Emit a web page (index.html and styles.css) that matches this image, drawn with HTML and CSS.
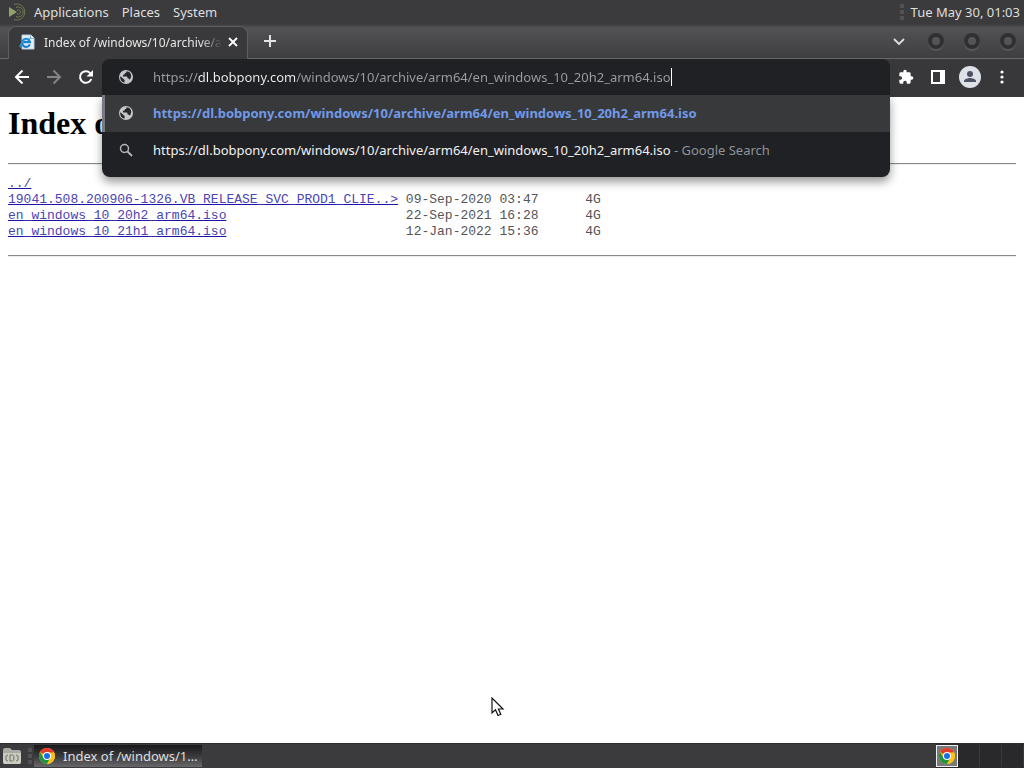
FILE: index.html
```
<!DOCTYPE html>
<html lang="en">
<head>
    <meta charset="UTF-8">
    <meta name="viewport" content="width=device-width, initial-scale=1.0">
    <title>Index of /windows/10/archive/arm64/</title>
    <link rel="stylesheet" href="styles.css">
</head>
<body>
    <!-- shared icons -->
    <svg class="defs" aria-hidden="true">
        <symbol id="globe" viewBox="0 0 16 16">
            <circle cx="8" cy="8" r="7" fill="#c4c7c9"/>
            <path d="M2.4 7.2 6.6 11v2.6C4 13.2 2 11 2.2 8zM8.6 2.3c.2 1.2-.5 1.7-1.6 1.9-.3 1.2-.8 1.5-2 1.6v1.6h3.6c1 .2 1 1.2 1.1 2 1 .1 1.7.4 2 1.3 2.6-3 1.600-7-1.700-8.200z" fill="#242629"/>
        </symbol>
        <symbol id="chrome" viewBox="0 0 16 16">
            <circle cx="8" cy="8" r="8" fill="#fbc116"/>
            <path d="M8 8 1.070 4A8 8 0 0 1 14.930 4z" fill="#e33b2e"/>
            <path d="M1.070 4A8 8 0 0 0 8 16l3.400-6L8 8l-3.400 2z" fill="#229342"/>
            <path d="M8 4.400h7.100A8 8 0 0 1 8 16l3.200-6z" fill="#fbc116"/>
            <circle cx="8" cy="8" r="4" fill="#fff"/>
            <circle cx="8" cy="8" r="3" fill="#1a6ee8"/>
        </symbol>
    </svg>

    <header class="panel">
        <nav class="menu">
            <svg class="logo" viewBox="0 0 20 20" width="20" height="20" aria-hidden="true">
                <g fill="none" stroke="#6f7d50">
                    <path d="M6 2.500A8 8 0 1 1 6 17.500"/>
                    <path d="M8 5.500a5 5 0 1 1 0 9"/>
                    <path d="M9 8.200a2.200 2.200 0 1 1 0 3.600"/>
                </g>
                <path d="M1 5l8 5-8 5z" fill="#93a06c"/>
            </svg>
            <button>Applications</button>
            <button>Places</button>
            <button>System</button>
        </nav>
        <div class="clock"><span class="grip"></span><time>Tue May 30, 01:03</time></div>
    </header>

    <div class="tab-strip">
        <div class="tab">
            <svg viewBox="0 0 16 16" width="16" height="16" aria-hidden="true">
                <path d="M3 1h9l3 3v11H3z" fill="#e8f1fa" stroke="#b8cde0"/>
                <path d="M11.500 1v3.500H15" fill="#fff" stroke="#9bb8d4"/>
                <path d="M10.800 10.300A4 4 0 1 1 11 8.200H4" fill="none" stroke="#1c83cf" stroke-width="2.200"/>
                <path d="M1.500 13.500C-1 12 5 4 12.500 3.800" fill="none" stroke="#45a8e8"/>
            </svg>
            <span class="tab-title">Index of /windows/10/archive/a</span>
            <button class="icon-btn" aria-label="Close tab">
                <svg viewBox="0 0 16 16" width="16" height="16"><path d="M4 4l8 8M12 4l-8 8" stroke="#fff" stroke-width="1.800"/></svg>
            </button>
        </div>
        <button class="icon-btn new-tab" aria-label="New tab">
            <svg viewBox="0 0 16 16" width="16" height="16"><path d="M8 2v12M2 8h12" stroke="#e4e4e4" stroke-width="2"/></svg>
        </button>
        <div class="window-buttons">
            <button class="icon-btn" aria-label="Search tabs">
                <svg viewBox="0 0 16 16" width="16" height="16"><path d="M3 6l5 5 5-5" fill="none" stroke="#dedede" stroke-width="1.800"/></svg>
            </button>
            <button class="round-btn" aria-label="Minimize"></button>
            <button class="round-btn" aria-label="Maximize"></button>
            <button class="round-btn" aria-label="Close"></button>
        </div>
    </div>

    <div class="toolbar">
        <div class="nav-buttons">
            <button class="icon-btn" aria-label="Back">
                <svg viewBox="0 0 16 16" width="16" height="16"><path d="M15 8H2M8.500 1.500 2 8l6.500 6.500" fill="none" stroke="#fff" stroke-width="2"/></svg>
            </button>
            <button class="icon-btn" aria-label="Forward" disabled>
                <svg viewBox="0 0 16 16" width="16" height="16"><path d="M1 8h13M7.500 1.500 14 8l-6.500 6.500" fill="none" stroke="#848486" stroke-width="2"/></svg>
            </button>
            <button class="icon-btn" aria-label="Reload">
                <svg viewBox="0 0 16 16" width="16" height="16"><path d="M13.300 10A5.800 5.800 0 1 1 12 3.900L13.500 5.500" fill="none" stroke="#fff" stroke-width="2"/><path d="M15 1v6.500H8.500z" fill="#fff"/></svg>
            </button>
        </div>
        <div class="omnibox">
            <div class="address">
                <svg class="row-icon" width="16" height="16" aria-hidden="true"><use href="#globe"/></svg>
                <input class="url" type="text" aria-label="Address and search bar" spellcheck="false" value="https://dl.bobpony.com/windows/10/archive/arm64/en_windows_10_20h2_arm64.iso">
                <span class="caret"></span>
            </div>
            <div class="suggestions">
                <a class="suggestion active" href="#">
                    <svg class="row-icon" width="16" height="16" aria-hidden="true"><use href="#globe"/></svg>
                    <b>https://dl.bobpony.com/windows/10/archive/arm64/en_windows_10_20h2_arm64.iso</b>
                </a>
                <a class="suggestion" href="#">
                    <svg class="row-icon" viewBox="0 0 16 16" width="16" height="16" aria-hidden="true"><circle cx="6.500" cy="6.500" r="4" fill="none" stroke="#b4b7ba" stroke-width="1.500"/><path d="M9.500 9.500l4.500 4.500" stroke="#b4b7ba" stroke-width="1.800"/></svg>
                    <span>https://dl.bobpony.com/windows/10/archive/arm64/en_windows_10_20h2_arm64.iso<span class="engine"> - Google Search</span></span>
                </a>
            </div>
        </div>
        <div class="actions">
            <button class="icon-btn" aria-label="Extensions">
                <svg viewBox="0 0 24 24" width="16" height="16"><path d="M20.500 11H19V7a2 2 0 0 0-2-2h-4V3.500a2.500 2.500 0 0 0-5 0V5H4a2 2 0 0 0-2 2v3.800h1.500a2.700 2.700 0 0 1 0 5.400H2V20a2 2 0 0 0 2 2h3.800v-1.500a2.700 2.700 0 0 1 5.400 0V22H17a2 2 0 0 0 2-2v-4h1.500a2.500 2.500 0 0 0 0-5z" fill="#fff"/></svg>
            </button>
            <button class="icon-btn" aria-label="Side panel">
                <svg viewBox="0 0 16 16" width="16" height="16"><path d="M1 1h14v14H1zM3 3v10h7V3z" fill="#fff" fill-rule="evenodd"/></svg>
            </button>
            <button class="icon-btn" aria-label="Profile">
                <svg viewBox="0 0 22 22" width="22" height="22"><circle cx="11" cy="11" r="11" fill="#dfe1e8"/><circle cx="11" cy="8" r="3" fill="#4d5164"/><path d="M5 16v-1c0-2 4-3 6-3s6 1 6 3v1z" fill="#4d5164"/></svg>
            </button>
            <button class="icon-btn" aria-label="Menu">
                <svg viewBox="0 0 16 16" width="16" height="16" fill="#fff"><circle cx="8" cy="3" r="1.600"/><circle cx="8" cy="8" r="1.600"/><circle cx="8" cy="13" r="1.600"/></svg>
            </button>
        </div>
    </div>

    <main class="page">
        <h1>Index o</h1>
        <hr>
        <table class="listing">
            <tr>
                <td class="name"><a href="#">../</a></td>
                <td class="date"></td>
                <td></td>
            </tr>
            <tr>
                <td class="name"><a href="#">19041.508.200906-1326.VB_RELEASE_SVC_PROD1_CLIE..&gt;</a></td>
                <td class="date">09-Sep-2020 03:47</td>
                <td>4G</td>
            </tr>
            <tr>
                <td class="name"><a href="#">en_windows_10_20h2_arm64.iso</a></td>
                <td class="date">22-Sep-2021 16:28</td>
                <td>4G</td>
            </tr>
            <tr>
                <td class="name"><a href="#">en_windows_10_21h1_arm64.iso</a></td>
                <td class="date">12-Jan-2022 15:36</td>
                <td>4G</td>
            </tr>
        </table>
        <hr>
        <svg class="pointer" viewBox="0 0 14 20" width="14" height="20" aria-hidden="true">
            <path d="M1 1v15l3.500-3.200L7 18.500l2.800-1.300L7.400 12H12z" fill="#fff" stroke="#111" stroke-width="1.200"/>
        </svg>
    </main>

    <footer class="taskbar">
        <button class="icon-btn files" aria-label="File manager">
            <svg viewBox="0 0 20 18" width="20" height="18">
                <path d="M1 3q0-2 2-2h5l2 2h7q2 0 2 2v10q0 2-2 2H3q-2 0-2-2z" fill="#a9aba2"/>
                <path d="M1 6h18v9q0 2-2 2H3q-2 0-2-2z" fill="#c9cbc1"/>
                <path d="M8 8v6h2.500q1.500 0 1.500-3t-1.500-3zM6 8l-2 1v4l2 1M14 8l2 1v4l-2 1" fill="none" stroke="#70736b"/>
            </svg>
        </button>
        <span class="grip"></span>
        <button class="task">
            <svg width="16" height="16" aria-hidden="true"><use href="#chrome"/></svg>
            <span>Index of /windows/1…</span>
        </button>
        <div class="workspaces">
            <button class="workspace current" aria-label="Workspace 1"><svg width="16" height="16"><use href="#chrome"/></svg></button>
            <button class="workspace" aria-label="Workspace 2"></button>
            <button class="workspace" aria-label="Workspace 3"></button>
            <button class="workspace" aria-label="Workspace 4"></button>
        </div>
    </footer>
</body>
</html>
```
FILE: styles.css
```
* {
    box-sizing: border-box;
}

body {
    display: flex;
    flex-direction: column;
    min-height: 100vh;
    margin: 0;
    background: #fff;
    font-family: "Noto Sans", sans-serif;
    font-size: 13px;
}

button {
    padding: 0;
    border: none;
    background: none;
    color: inherit;
    font: inherit;
}

svg {
    display: block;
    flex: none;
}

.defs {
    position: absolute;
    width: 0;
    height: 0;
}

.icon-btn {
    display: flex;
    flex: none;
}

/* Desktop panel */
.panel {
    display: flex;
    justify-content: space-between;
    align-items: center;
    height: 24px;
    padding: 0 4px 0 8px;
    background: #3b3b3d;
    color: #dfdfdf;
}

.menu,
.clock {
    display: flex;
    align-items: center;
}

.menu {
    gap: 13px;
}

.logo {
    margin-right: -7px;
}

.clock {
    gap: 7px;
}

.grip {
    width: 4px;
    height: 16px;
    background: repeating-linear-gradient(#525254 0 4px, transparent 4px 6px);
}

/* Tabs */
.tab-strip {
    display: flex;
    align-items: center;
    height: 35px;
    padding: 0 8px;
    border-bottom: 1px solid #68686a;
    background: linear-gradient(#3c3c3e, #525254 12%, #3e3e40);
    color: #e6e6e6;
}

.tab {
    display: flex;
    align-items: center;
    align-self: flex-end;
    width: 240px;
    height: 33px;
    margin-bottom: -1px;
    padding: 0 8px 2px 10px;
    border: 1px solid #5e5e60;
    border-bottom: none;
    border-radius: 8px 8px 0 0;
    background: #39393b;
}

.tab-title {
    flex: 1;
    margin: 0 3px 0 9px;
    white-space: nowrap;
    font-size: 12px;
    -webkit-mask-image: linear-gradient(to right, #000 88%, transparent);
    mask-image: linear-gradient(to right, #000 88%, transparent);
}

.new-tab {
    margin-left: 14px;
}

.window-buttons {
    display: flex;
    align-items: center;
    gap: 20px;
    margin-left: auto;
}

.window-buttons .icon-btn {
    margin-right: 1px;
}

.round-btn {
    width: 16px;
    height: 16px;
    border: 4px solid #303032;
    border-radius: 50%;
    background: #555557;
    box-shadow: 0 2px 1px #58585a;
}

/* Toolbar */
.toolbar {
    display: flex;
    height: 38px;
    background: #38383a;
}

.nav-buttons,
.actions {
    display: flex;
    align-items: center;
}

.nav-buttons {
    gap: 16px;
    padding: 0 8px 2px 14px;
}

.actions {
    gap: 13px;
    padding: 0 14px 2px 8px;
}

.actions .icon-btn:first-child {
    margin-right: 3px;
}

.omnibox {
    position: relative;
    z-index: 1;
    flex: 1;
    color: #f1f1f2;
    font-size: 13px;
}

.address,
.suggestion {
    display: flex;
    align-items: center;
    height: 37px;
    padding: 0 0 2px 16px;
    white-space: nowrap;
}

.address {
    height: 36px;
    padding-bottom: 0;
    border-radius: 8px 8px 0 0;
    background: #202124;
}

.row-icon {
    margin-right: 19px;
}

/* scheme and path are dimmed, the host is bright */
.url {
    field-sizing: content;
    padding: 0;
    border: none;
    outline: none;
    background: linear-gradient(to right, #9aa0a3 45px, #f1f1f2 45px 142px, #9aa0a3 142px);
    -webkit-background-clip: text;
    background-clip: text;
    color: transparent;
    font: inherit;
}

.caret {
    width: 1px;
    height: 18px;
    background: #fff;
}

.suggestions {
    position: absolute;
    top: 36px;
    left: 0;
    right: 0;
    padding-bottom: 8px;
    border-radius: 0 0 8px 8px;
    background: #202124;
    box-shadow: 0 5px 10px rgba(0, 0, 0, 0.4);
    overflow: hidden;
}

.suggestion {
    color: inherit;
    text-decoration: none;
}

.active {
    padding-left: 13px;
    border-left: 3px solid #777a7e;
    background: #38393b;
    color: #7199e8;
}

.suggestion b {
    font-weight: 700;
}

.engine {
    color: #8f9397;
}

/* Directory listing */
.page {
    position: relative;
    flex: 1;
    padding: 8px;
    background: #fff;
    font-family: "Liberation Serif", serif;
}

.page h1 {
    margin: 0 0 21px;
    color: #000;
    font-size: 32px;
    line-height: 37px;
}

.page hr {
    height: 2px;
    margin: 0;
    border: none;
    border-top: 1px solid #8a8a8a;
    border-bottom: 1px solid #ececec;
}

.listing {
    margin: 11px 0 15px;
    border-collapse: collapse;
    color: #555;
    font-family: "Liberation Mono", monospace;
    font-size: 13px;
    line-height: 16px;
}

.listing td {
    height: 16px;
    padding: 0;
    white-space: nowrap;
}

.listing .name {
    width: 51ch;
}

.listing .date {
    width: 23ch;
}

.listing a {
    color: #4a44b4;
    text-decoration-color: #1c14a8;
    text-decoration-skip-ink: none;
}

.pointer {
    position: absolute;
    left: 491px;
    top: 600px;
}

/* Bottom panel */
.taskbar {
    display: flex;
    align-items: center;
    height: 25px;
    padding-left: 2px;
    border-top: 1px solid #2c2c2e;
    background: #3b3b3d;
    color: #dfdfdf;
}

.files {
    margin-right: 6px;
}

.task {
    display: flex;
    align-items: center;
    gap: 8px;
    width: 168px;
    height: 22px;
    margin-left: 2px;
    padding-left: 5px;
    background: linear-gradient(#19191b, #39393b 50%, #68686a);
    white-space: nowrap;
}

.workspaces {
    display: flex;
    align-items: center;
    align-self: stretch;
    margin-left: auto;
    background: #29292b;
}

.workspace {
    width: 22px;
    height: 22px;
    border-right: 1px solid #39393b;
}

.current {
    display: flex;
    align-items: center;
    justify-content: center;
    border: 1px solid #eee;
    background: #777a78;
}
```
